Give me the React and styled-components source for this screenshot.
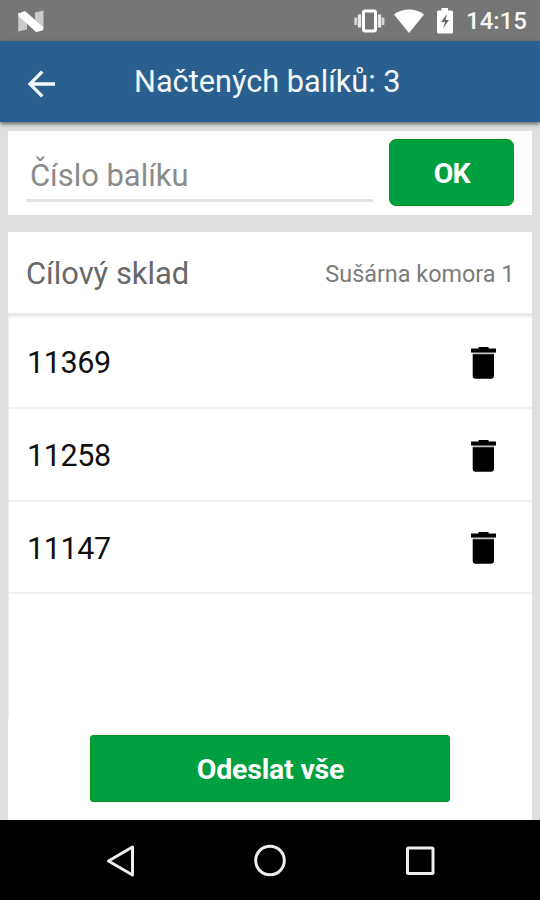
import React from "react";
import styled, { createGlobalStyle } from "styled-components";

const GlobalStyle = createGlobalStyle`
  * { box-sizing: border-box; }
  body { margin: 0; font-family: Roboto, "Liberation Sans", sans-serif; }
`;

const Screen = styled.div`
  width: 540px;
  height: 900px;
  display: flex;
  flex-direction: column;
  overflow: hidden;
  background: #dfdfdf;
`;

const StatusBar = styled.header`
  flex: none;
  height: 41px;
  padding: 0 13px 0 17px;
  display: flex;
  align-items: center;
  background: #767676;
`;

const StatusIcons = styled.div`
  margin-left: auto;
  display: grid;
  grid-template-columns: 40px 42px 30px 61px;
  align-items: center;
`;

const Clock = styled.span`
  font-size: 24px;
  font-weight: 500;
  line-height: 41px;
  white-space: nowrap;
  color: #f6f6f6;
  padding-top: 2px;
`;

const AppBar = styled.div`
  flex: none;
  height: 81px;
  display: flex;
  align-items: center;
  padding-left: 26px;
  background: #2a6090;
  box-shadow: 0 2px 4px rgba(0, 0, 0, 0.55);
`;

const BackButton = styled.button`
  width: 30px;
  height: 30px;
  margin: 5px 78px 0 0;
  padding: 0;
  border: 0;
  background: none;
  display: flex;
`;

const Title = styled.h1`
  margin: 0;
  font-size: 30.7px;
  font-weight: 400;
  line-height: 81px;
  white-space: nowrap;
  color: #f4f8fb;
`;

const Content = styled.main`
  flex: 1;
  display: flex;
  flex-direction: column;
  gap: 17px;
  padding: 9px 8.5px 0 8px;
`;

const EntryCard = styled.section`
  flex: none;
  height: 84px;
  display: flex;
  justify-content: space-between;
  padding: 8px 17.5px 0 18px;
  background: #fff;
`;

const Field = styled.div`
  width: 347px;
  height: 63px;
  padding: 0 0 0 4px;
  border-bottom: 3px solid #e3e3e3;
  font-size: 30.9px;
  line-height: 73px;
  white-space: nowrap;
  color: #8b8b8b;
`;

const GreenButton = styled.button`
  flex: none;
  width: ${(p) => p.$width}px;
  height: 67px;
  padding: 2px 0 0 1px;
  border: 1px solid #07931c;
  border-radius: ${(p) => p.$radius}px;
  background: #00a040;
  color: #fff;
  font-family: inherit;
  font-size: 28.5px;
  font-weight: 700;
  line-height: 63px;
  letter-spacing: ${(p) => p.$tracking};
`;

const ListCard = styled.section`
  flex: 1;
  display: flex;
  flex-direction: column;
  background: #fff;
`;

const Destination = styled.div`
  flex: none;
  height: 84px;
  padding: 2px 17px 0 18px;
  display: flex;
  justify-content: space-between;
  align-items: center;
  border-bottom: 3px solid #eaeaea;
`;

const DestinationLabel = styled.span`
  font-size: 30.9px;
  color: #686868;
`;

const DestinationValue = styled.span`
  font-size: 23.4px;
  color: #7c7c7c;
`;

const Packages = styled.ul`
  flex: none;
  height: 402px;
  margin: 0;
  padding: 1px 0 0;
  list-style: none;
  border-top: 2px solid #f6f6f6;
  box-shadow: inset 1px 0 0 #efefef;
`;

const PackageRow = styled.li`
  height: ${(p) => p.$height}px;
  padding: 0 36px 0 19px;
  display: flex;
  justify-content: space-between;
  align-items: center;
  border-bottom: 2px solid #f1f1f1;
  font-size: 30.5px;
  letter-spacing: -0.4px;
  color: #111;
`;

const PackageNumber = styled.span`
  padding-top: ${(p) => Math.max(0, p.$shift)}px;
  padding-bottom: ${(p) => Math.max(0, -p.$shift)}px;
`;

const DeleteButton = styled.button`
  width: 25px;
  height: 32px;
  margin-top: ${(p) => p.$drop}px;
  padding: 0;
  border: 0;
  background: none;
  display: flex;
`;

const Footer = styled.footer`
  display: flex;
  padding: 17px 0 0 82px;
`;

const NavBar = styled.nav`
  flex: none;
  height: 80px;
  display: flex;
  justify-content: space-between;
  align-items: center;
  padding: 2px 105px 0 104px;
  background: #000;
`;

const NougatIcon = () => (
  <svg width="28" height="24" viewBox="0 0 28 24">
    <path d="M1.200 3.500 10 8v12.500L1.200 22.500z M18 3.500l8.500-2v19.500L18 19z" fill="#cacaca" />
    <path d="M1.500 4.500 8 2 26.500 18.500 25.500 21.500 19 23 1.500 7z" fill="#fff" />
  </svg>
);

const VibrateIcon = () => (
  <svg width="32" height="26" viewBox="0 0 32 26">
    <rect x="9.500" y="3" width="12" height="20" rx="1.500" fill="none" stroke="#fff" strokeWidth="3" />
    <path d="M5.500 6.500v13M25.500 6.500v13" stroke="#e8e8e8" strokeWidth="3.300" />
    <path d="M1.800 9.500v7.500M29 9.500v7.500" stroke="#d4d4d4" strokeWidth="2.800" />
  </svg>
);

const WifiIcon = () => (
  <svg width="30" height="26" viewBox="0 0 30 26">
    <path d="M0 6.500C8.500-.2 21.500-.2 30 6.500L15 25z" fill="#fff" />
  </svg>
);

const BatteryIcon = () => (
  <svg width="18" height="26" viewBox="0 0 18 26">
    <path d="M5.500 0h6.500v2.500h3.500Q17 2.500 17 4v20Q17 25.500 15.500 25.500h-13Q1 25.500 1 24V4Q1 2.500 2.500 2.500H5.500z" fill="#fff" />
    <path d="M11 6 5 14h4L7 20.500l6-8.500H9.700z" fill="#6c6c6c" />
  </svg>
);

const BackArrowIcon = () => (
  <svg width="30" height="30" viewBox="0 0 30 30" fill="none" stroke="#f7fafc" strokeWidth="3.300">
    <path d="M29 15H4M16.300 2.700 4 15l12.300 12.300" />
  </svg>
);

const TrashIcon = () => (
  <svg width="25" height="32" viewBox="0 0 25 32">
    <path d="M1.700 5h21.300v3H1.700z" fill="#c4c4c4" />
    <path d="M7.500 0h10v1.500H25v4H0v-4h7.500z" fill="#000" />
    <path d="M1.700 7.300h21.300v21.400q0 3-3 3H4.700q-3 0-3-3z" fill="#000" />
  </svg>
);

const NavBackIcon = () => (
  <svg width="32" height="34" viewBox="0 0 32 34">
    <path d="M28.500 3v28L4.500 17z" fill="none" stroke="#ededed" strokeWidth="3" strokeLinejoin="round" />
  </svg>
);

const NavHomeIcon = () => (
  <svg width="34" height="34" viewBox="0 0 34 34">
    <circle cx="16" cy="16.500" r="14.300" fill="none" stroke="#ededed" strokeWidth="3" />
  </svg>
);

const NavRecentsIcon = () => (
  <svg width="30" height="30" viewBox="0 0 30 30">
    <rect x="2.500" y="2" width="25.500" height="25.500" rx="1" fill="none" stroke="#ededed" strokeWidth="3" />
  </svg>
);

const packages = [
  { id: "11369", height: 90, drop: -1, shift: -2 },
  { id: "11258", height: 93, drop: 2, shift: 1 },
  { id: "11147", height: 92, drop: 2, shift: 2 },
];

export default function App() {
  return (
    <>
      <GlobalStyle />
      <Screen>
        <StatusBar>
          <NougatIcon />
          <StatusIcons>
            <VibrateIcon />
            <WifiIcon />
            <BatteryIcon />
            <Clock>14:15</Clock>
          </StatusIcons>
        </StatusBar>
        <AppBar>
          <BackButton aria-label="Zpět">
            <BackArrowIcon />
          </BackButton>
          <Title>Načtených balíků: 3</Title>
        </AppBar>
        <Content>
          <EntryCard>
            <Field>Číslo balíku</Field>
            <GreenButton $width={125.5} $radius={7} $tracking="-0.9px">OK</GreenButton>
          </EntryCard>
          <ListCard>
            <Destination>
              <DestinationLabel>Cílový sklad</DestinationLabel>
              <DestinationValue>Sušárna komora 1</DestinationValue>
            </Destination>
            <Packages>
              {packages.map((item) => (
                <PackageRow key={item.id} $height={item.height}>
                  <PackageNumber $shift={item.shift}>{item.id}</PackageNumber>
                  <DeleteButton aria-label="Smazat" $drop={item.drop}>
                    <TrashIcon />
                  </DeleteButton>
                </PackageRow>
              ))}
            </Packages>
            <Footer>
              <GreenButton $width={360} $radius={3} $tracking="-0.2px">Odeslat vše</GreenButton>
            </Footer>
          </ListCard>
        </Content>
        <NavBar>
          <NavBackIcon />
          <NavHomeIcon />
          <NavRecentsIcon />
        </NavBar>
      </Screen>
    </>
  );
}
